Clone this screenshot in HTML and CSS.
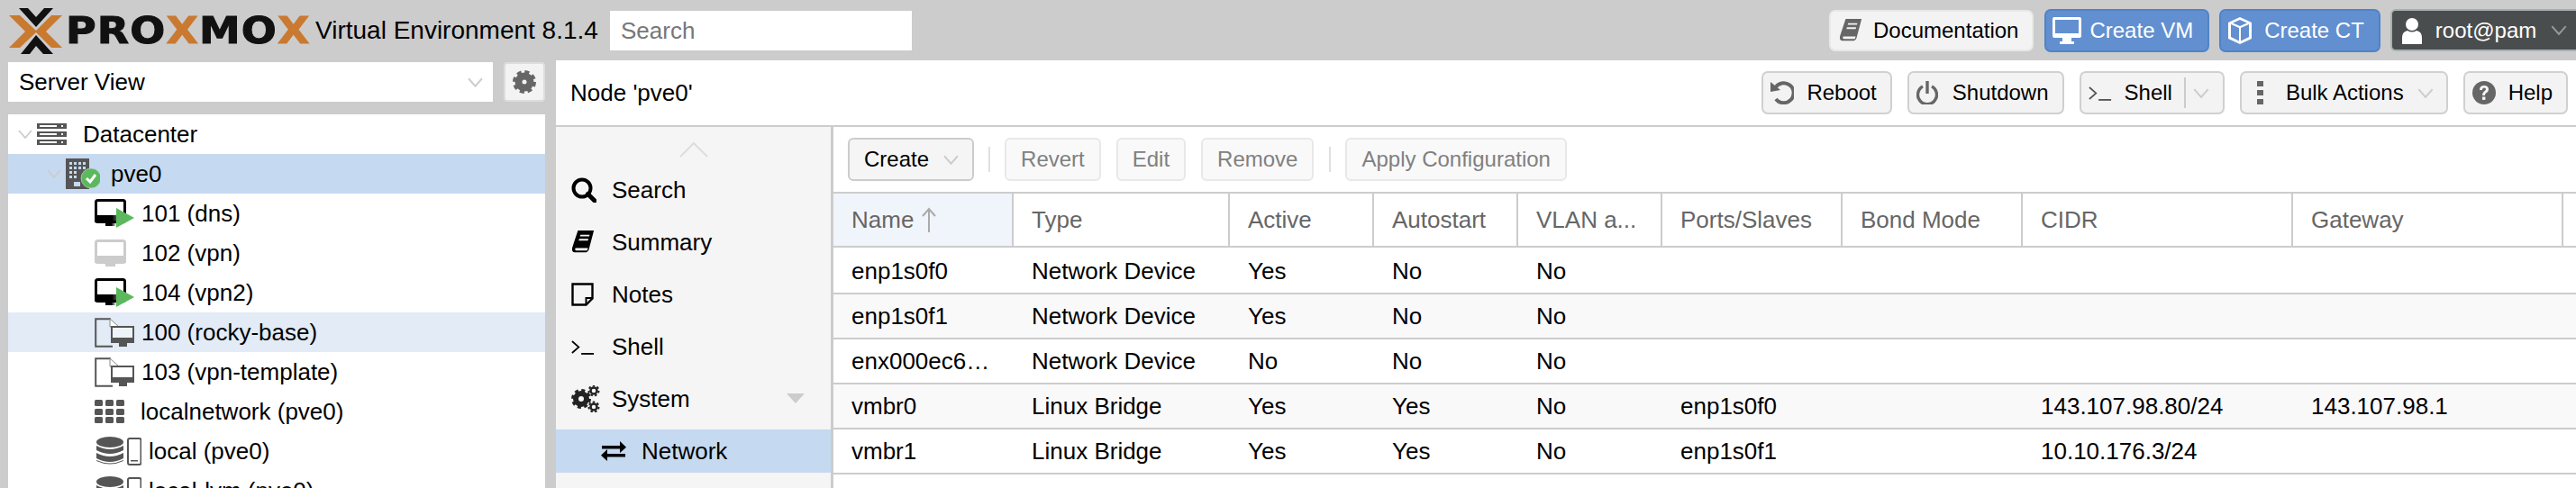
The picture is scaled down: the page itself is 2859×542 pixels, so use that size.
FILE: index.html
```html
<!DOCTYPE html>
<html lang="en">
<head>
    <meta charset="UTF-8">
    <title>pve0 - Proxmox Virtual Environment</title>
    <link rel="stylesheet" href="styles.css">
</head>
<body>
    <svg class="defs" width="0" height="0">
        <defs>
            <linearGradient id="fade" x1="0" x2="1" y1="0" y2="0">
                <stop offset="0.55" stop-color="#000"/>
                <stop offset="1" stop-color="#000" stop-opacity="0"/>
            </linearGradient>
            <symbol id="chev" viewBox="0 0 16 10"><polyline points="1,1 8,9 15,1" fill="none" stroke="currentColor" stroke-width="1.8"/></symbol>
            <symbol id="term" viewBox="0 0 28 18"><path d="M1 2l8 7-8 7" fill="none" stroke="currentColor" stroke-width="1.8"/><rect x="12" y="16" width="15" height="2" fill="currentColor"/></symbol>
            <symbol id="book" viewBox="0 0 26 28"><path d="M7 0h19l-1 4-5 19q-1 3-3 3H3q-3 0-3-4 0-1 1-4zM10 5l-.5 2h11l.5-2zM8.500 10L8 12h11l.5-2zM4 21q-1 3 1 3h13l1-3z" fill="currentColor" fill-rule="evenodd"/></symbol>
            <symbol id="doc-vm" viewBox="0 0 44 33"><path d="M18 1.200H1.200v30.600H20" fill="none" stroke="#555" stroke-width="2"/><path d="M17 1l10 9H17z" fill="#fff" stroke="#888" stroke-width="1"/><rect x="19" y="10" width="24" height="17" fill="#fff" fill-opacity=".4" stroke="#555" stroke-width="2"/><rect x="18" y="22" width="26" height="6" fill="#555"/><rect x="27" y="28" width="9" height="4" fill="#555"/></symbol>
            <symbol id="vm-on" viewBox="0 0 44 33"><rect x="1.500" y="1.500" width="32" height="24" rx="2" fill="none" stroke="#000" stroke-width="3"/><rect x="0" y="18" width="35" height="8" rx="1" fill="url(#fade)"/><rect x="12" y="26" width="12" height="4" fill="url(#fade)"/><polygon points="24,10 44,21 24,32" fill="#5cb85c"/></symbol>
            <symbol id="db" viewBox="0 0 50 33"><g fill="#555"><ellipse cx="15" cy="6" rx="15" ry="6"/><path d="M0 10q15 8 30 0v5q-15 8-30 0z"/><path d="M0 18q15 8 30 0v6q-15 8-30 0z"/><path d="M0 26q15 7 30 0v1q-15 7-30 0z"/></g><rect x="35" y="2" width="14.500" height="29" rx="2" fill="none" stroke="#555" stroke-width="2"/><rect x="38" y="26" width="8" height="1.500" fill="#555"/></symbol>
        </defs>
    </svg>

    <header class="topbar">
        <div class="logo">
            <svg class="logo-mark" width="60" height="52" viewBox="0 0 60 52">
                <polygon points="0,8 12,8 31,26 12,44 0,44 18,26" fill="#c97a30"/>
                <polygon points="59,8 47,8 29,26 47,44 59,44 41,26" fill="#c97a30"/>
                <polygon points="11,0 21,0 30,10 39,0 49,0 30,21" fill="#111"/>
                <polygon points="13,51 23,51 30,42 38,51 49,51 30,30" fill="#111"/>
            </svg>
            <span class="logo-word">PRO<b>X</b>MO<b>X</b></span>
        </div>
        <span class="version">Virtual Environment 8.1.4</span>
        <div class="search-box">Search</div>
        <div class="top-actions">
            <div class="btn doc-btn">
                <svg class="ico" width="26" height="26" color="#666"><use href="#book"/></svg>
                <span>Documentation</span>
            </div>
            <div class="btn blue-btn vm-btn">
                <svg class="ico" width="32" height="30" viewBox="0 0 32 30"><rect x="0" y="0" width="32" height="23" rx="2" fill="#fff"/><rect x="3" y="3" width="26" height="15" fill="#628fcf"/><rect x="11" y="23" width="10" height="5" fill="#fff"/><rect x="8" y="27" width="16" height="3" fill="#fff"/></svg>
                <span>Create VM</span>
            </div>
            <div class="btn blue-btn ct-btn">
                <svg class="ico" width="26" height="30" viewBox="0 0 26 30"><path d="M13 0l13 6v18l-13 6-13-6V6zM3 8v14l9 4.500V12zM14 12v14.500l9-4.500V8zM13 3L5 6.500l8 3.500 8-3.500z" fill="#fff" fill-rule="evenodd"/></svg>
                <span>Create CT</span>
            </div>
            <div class="btn user-btn">
                <svg class="ico" width="22" height="30" viewBox="0 0 22 30"><circle cx="11" cy="8" r="7" fill="#fff"/><path d="M0 30v-7q0-7 6-8 5 3 10 0 6 1 6 8v7z" fill="#fff"/></svg>
                <span>root@pam</span>
                <svg class="caret" width="18" height="11"><use href="#chev"/></svg>
            </div>
        </div>
    </header>

    <div class="main">
        <aside class="side">
            <div class="view-row">
                <div class="view-select">
                    <span>Server View</span>
                    <svg class="select-caret" width="17" height="11"><use href="#chev"/></svg>
                </div>
                <div class="gear-btn">
                    <svg width="26" height="26" viewBox="0 0 26 26"><circle cx="13" cy="13" r="6.500" fill="none" stroke="#666" stroke-width="8"/><circle cx="13" cy="13" r="11" fill="none" stroke="#666" stroke-width="4" stroke-dasharray="5 3.640"/></svg>
                </div>
            </div>
            <div class="tree">
                <div class="tree-row d0">
                    <svg class="tree-chev" width="16" height="10"><use href="#chev"/></svg>
                    <span class="slot s-dc">
                        <svg width="33" height="24" viewBox="0 0 33 24">
                            <g fill="#555"><rect width="33" height="6"/><rect y="9" width="33" height="6"/><rect y="18" width="33" height="6"/></g>
                            <g fill="#fff"><rect x="3" y="2" width="19" height="2"/><rect x="3" y="11" width="19" height="2"/><rect x="3" y="20" width="19" height="2"/><rect x="27" y="2" width="2" height="2"/><rect x="27" y="11" width="2" height="2"/><rect x="27" y="20" width="2" height="2"/></g>
                        </svg>
                    </span>
                    Datacenter
                </div>
                <div class="tree-row d1 selected">
                    <svg class="tree-chev" width="16" height="10"><use href="#chev"/></svg>
                    <span class="slot s-node">
                        <svg width="38" height="34" viewBox="0 0 38 34">
                            <rect width="26" height="34" fill="#555"/>
                            <g fill="#c5d9f0"><rect x="4" y="4" width="3" height="3"/><rect x="9" y="4" width="3" height="3"/><rect x="14" y="4" width="3" height="3"/><rect x="19" y="4" width="3" height="3"/><rect x="4" y="9" width="3" height="3"/><rect x="9" y="9" width="3" height="3"/><rect x="14" y="9" width="3" height="3"/><rect x="19" y="9" width="3" height="3"/><rect x="4" y="14" width="3" height="3"/><rect x="9" y="14" width="3" height="3"/><rect x="4" y="19" width="3" height="3"/><rect x="9" y="19" width="3" height="3"/><rect x="9" y="26" width="7" height="5"/></g>
                            <circle cx="28" cy="22" r="11" fill="#5cb85c" stroke="#c5d9f0" stroke-opacity=".6"/>
                            <polyline points="23,22 27,26 33,18" fill="none" stroke="#fff" stroke-width="3"/>
                        </svg>
                    </span>
                    pve0
                </div>
                <div class="tree-row d2">
                    <span class="slot s-leaf"><svg width="44" height="33"><use href="#vm-on"/></svg></span>
                    101 (dns)
                </div>
                <div class="tree-row d2">
                    <span class="slot s-leaf">
                        <svg width="35" height="31" viewBox="0 0 35 31"><rect x="1.500" y="1.500" width="32" height="24" rx="2" fill="#fff" stroke="#ccc" stroke-width="3"/><rect y="18" width="35" height="8" rx="1" fill="#ccc"/><rect x="12" y="26" width="11" height="4" fill="#ccc"/></svg>
                    </span>
                    102 (vpn)
                </div>
                <div class="tree-row d2">
                    <span class="slot s-leaf"><svg width="44" height="33"><use href="#vm-on"/></svg></span>
                    104 (vpn2)
                </div>
                <div class="tree-row d2 hovered">
                    <span class="slot s-leaf"><svg width="44" height="33"><use href="#doc-vm"/></svg></span>
                    100 (rocky-base)
                </div>
                <div class="tree-row d2">
                    <span class="slot s-leaf"><svg width="44" height="33"><use href="#doc-vm"/></svg></span>
                    103 (vpn-template)
                </div>
                <div class="tree-row d2">
                    <span class="slot s-net">
                        <svg width="33" height="26" viewBox="0 0 33 26"><g fill="#555"><rect width="9" height="7" rx="1.500"/><rect x="12" width="9" height="7" rx="1.500"/><rect x="24" width="9" height="7" rx="1.500"/><rect y="10" width="9" height="7" rx="1.500"/><rect x="12" y="10" width="9" height="7" rx="1.500"/><rect x="24" y="10" width="9" height="7" rx="1.500"/><rect y="19" width="9" height="7" rx="1.500"/><rect x="12" y="19" width="9" height="7" rx="1.500"/><rect x="24" y="19" width="9" height="7" rx="1.500"/></g></svg>
                    </span>
                    localnetwork (pve0)
                </div>
                <div class="tree-row d2">
                    <span class="slot s-store"><svg width="50" height="33"><use href="#db"/></svg></span>
                    local (pve0)
                </div>
                <div class="tree-row d2">
                    <span class="slot s-store"><svg width="50" height="33"><use href="#db"/></svg></span>
                    local-lvm (pve0)
                </div>
            </div>
        </aside>

        <section class="center">
            <div class="node-bar">
                <span class="node-title">Node 'pve0'</span>
                <div class="node-actions">
                    <div class="btn">
                        <span class="icon-slot"><svg width="26" height="26" viewBox="0 0 26 26"><path d="M5 8a11 11 0 1 1 1 12" fill="none" stroke="#666" stroke-width="4"/><polygon points="0,1 11,10 0,12" fill="#666"/></svg></span>
                        <span>Reboot</span>
                    </div>
                    <div class="btn">
                        <span class="icon-slot"><svg width="24" height="26" viewBox="0 0 24 26"><path d="M7 6a10.500 10.500 0 1 0 10 0" fill="none" stroke="#666" stroke-width="3.400"/><rect x="10.300" y="0" width="3.400" height="14" fill="#666"/></svg></span>
                        <span>Shutdown</span>
                    </div>
                    <div class="btn shell-btn">
                        <span class="icon-slot"><svg width="26" height="17" color="#555"><use href="#term"/></svg></span>
                        <span>Shell</span>
                        <i class="split"></i>
                        <svg class="caret" width="18" height="11"><use href="#chev"/></svg>
                    </div>
                    <div class="btn bulk-btn">
                        <svg class="dots" width="8" height="26" viewBox="0 0 8 26"><g fill="#666"><rect width="7" height="6"/><rect y="10" width="7" height="6"/><rect y="20" width="7" height="6"/></g></svg>
                        <span>Bulk Actions</span>
                        <svg class="caret" width="18" height="11"><use href="#chev"/></svg>
                    </div>
                    <div class="btn help-btn">
                        <span class="icon-slot"><svg width="26" height="26" viewBox="0 0 26 26"><circle cx="13" cy="13" r="13" fill="#666"/><path d="M8 10q0-5 5-5t5 4.500q0 2.500-3 4-1 .6-1 2.500h-3q0-3 2-4.500 2-1.200 2-2.500t-2-1.500-2 2.500z" fill="#f5f5f5"/><rect x="11" y="17.500" width="3.400" height="3.400" fill="#f5f5f5"/></svg></span>
                        <span>Help</span>
                    </div>
                </div>
            </div>

            <div class="content">
                <nav class="nav">
                    <div class="nav-up">
                        <svg width="32" height="18" viewBox="0 0 32 18"><polyline points="1,17 16,2 31,17" fill="none" stroke="#ddd" stroke-width="2"/></svg>
                    </div>
                    <div class="nav-item">
                        <span class="nav-ico"><svg width="28" height="28" viewBox="0 0 28 28"><circle cx="12" cy="12" r="9.500" fill="none" stroke="#000" stroke-width="4"/><line x1="18.500" y1="18.500" x2="26" y2="26" stroke="#000" stroke-width="5" stroke-linecap="round"/></svg></span>
                        Search
                    </div>
                    <div class="nav-item">
                        <span class="nav-ico"><svg width="26" height="26" color="#000"><use href="#book"/></svg></span>
                        Summary
                    </div>
                    <div class="nav-item">
                        <span class="nav-ico"><svg width="26" height="26" viewBox="0 0 26 26"><path d="M1.500 1.500h22v16l-7 7h-15z" fill="none" stroke="#000" stroke-width="2.400"/><path d="M23 17h-6.500v7" fill="none" stroke="#000" stroke-width="2"/></svg></span>
                        Notes
                    </div>
                    <div class="nav-item">
                        <span class="nav-ico"><svg width="26" height="17" color="#000"><use href="#term"/></svg></span>
                        Shell
                    </div>
                    <div class="nav-item">
                        <span class="nav-ico"><svg width="32" height="30" viewBox="0 0 32 30"><circle cx="11" cy="15" r="6" fill="none" stroke="#222" stroke-width="6"/><circle cx="11" cy="15" r="9.500" fill="none" stroke="#222" stroke-width="3" stroke-dasharray="4 3.460"/><g fill="none" stroke="#222"><circle cx="25" cy="6" r="3.500" stroke-width="2.500"/><circle cx="25" cy="24" r="3.500" stroke-width="2.500"/><circle cx="25" cy="6" r="5.500" stroke-width="2" stroke-dasharray="2.500 2.300"/><circle cx="25" cy="24" r="5.500" stroke-width="2" stroke-dasharray="2.500 2.300"/></g></svg></span>
                        System
                        <svg class="nav-arrow" width="20" height="11" viewBox="0 0 20 11"><polygon points="0,0 20,0 10,11" fill="#ccc"/></svg>
                    </div>
                    <div class="nav-item sub active">
                        <span class="nav-ico"><svg width="28" height="24" viewBox="0 0 28 24"><g fill="#000"><rect x="1" y="6" width="22" height="3.500"/><polygon points="21,1 28,7.800 21,14"/><rect x="5" y="15" width="22" height="3.500"/><polygon points="7,10 0,16.800 7,23"/></g></svg></span>
                        Network
                    </div>
                </nav>

                <div class="panel">
                    <div class="toolbar">
                        <div class="tbtn create-btn"><span>Create</span><svg class="caret" width="17" height="11"><use href="#chev"/></svg></div>
                        <i class="tsep"></i>
                        <div class="tbtn off">Revert</div>
                        <div class="tbtn off">Edit</div>
                        <div class="tbtn off">Remove</div>
                        <i class="tsep"></i>
                        <div class="tbtn apply">Apply Configuration</div>
                    </div>
                    <table class="grid">
                        <colgroup>
                            <col class="w200"><col class="w240"><col class="w160"><col class="w160"><col class="w160"><col class="w200"><col class="w200"><col class="w300"><col class="w300"><col>
                        </colgroup>
                        <thead>
                            <tr>
                                <th class="sorted">Name <svg class="sort-arrow" width="18" height="28" viewBox="0 0 18 28"><path d="M9 28V2M2 10l7-8 7 8" fill="none" stroke="#aaa" stroke-width="2"/></svg></th>
                                <th>Type</th><th>Active</th><th>Autostart</th><th>VLAN a...</th><th>Ports/Slaves</th><th>Bond Mode</th><th>CIDR</th><th>Gateway</th><th class="last"></th>
                            </tr>
                        </thead>
                        <tbody>
                            <tr class="first"><td>enp1s0f0</td><td>Network Device</td><td>Yes</td><td>No</td><td>No</td><td></td><td></td><td></td><td></td><td></td></tr>
                            <tr class="alt"><td>enp1s0f1</td><td>Network Device</td><td>Yes</td><td>No</td><td>No</td><td></td><td></td><td></td><td></td><td></td></tr>
                            <tr><td>enx000ec6…</td><td>Network Device</td><td>No</td><td>No</td><td>No</td><td></td><td></td><td></td><td></td><td></td></tr>
                            <tr class="alt"><td>vmbr0</td><td>Linux Bridge</td><td>Yes</td><td>Yes</td><td>No</td><td>enp1s0f0</td><td></td><td>143.107.98.80/24</td><td>143.107.98.1</td><td></td></tr>
                            <tr><td>vmbr1</td><td>Linux Bridge</td><td>Yes</td><td>Yes</td><td>No</td><td>enp1s0f1</td><td></td><td>10.10.176.3/24</td><td></td><td></td></tr>
                        </tbody>
                    </table>
                </div>
            </div>
        </section>
    </div>
</body>
</html>
```

FILE: styles.css
```css
* {
    box-sizing: border-box;
}

html, body {
    margin: 0;
    height: 542px;
    overflow: hidden;
}

body {
    font-family: "Liberation Sans", Arial, sans-serif;
    font-size: 26px;
    color: #000;
    background: #ccc;
}

.defs {
    position: absolute;
}

/* top bar */
.topbar {
    display: flex;
    align-items: center;
    height: 67px;
}

.logo {
    display: flex;
    align-items: center;
    flex: none;
    width: 350px;
    padding-left: 10px;
    filter: blur(0.6px);
}

.logo-mark {
    flex: none;
    margin-top: 2px;
}

.logo-word {
    margin-left: 3px;
    font-family: "DejaVu Sans", sans-serif;
    font-weight: 700;
    font-size: 41px;
    letter-spacing: 1px;
    color: #111;
    white-space: nowrap;
    transform: scaleX(1.12);
    transform-origin: left center;
    -webkit-text-stroke: 1px currentColor;
}

.logo-word b {
    color: #c97a30;
}

.version {
    flex: none;
    width: 327px;
    font-size: 28px;
    white-space: nowrap;
}

.search-box {
    flex: none;
    width: 335px;
    height: 44px;
    padding-left: 12px;
    line-height: 44px;
    background: #fff;
    color: #777;
}

.top-actions {
    display: flex;
    align-items: center;
    gap: 11px;
    margin-left: auto;
    width: 829px;
    flex: none;
}

.btn {
    display: flex;
    align-items: center;
    height: 48px;
    padding: 0 15px 0 8px;
    font-size: 24px;
    background: #f3f3f3;
    border: 2px solid #d0d0d0;
    border-radius: 7px;
    white-space: nowrap;
}

.ico {
    flex: none;
}

.doc-btn {
    height: 46px;
    margin-right: 1px;
    padding-left: 9px;
    border-color: #e8e8e8;
}

.doc-btn .ico {
    margin-right: 12px;
}

.blue-btn {
    color: #fff;
    background: #628fcf;
    border-color: #5083c8;
}

.vm-btn {
    padding-left: 7px;
    padding-right: 16px;
}

.vm-btn .ico {
    margin-right: 9px;
}

.ct-btn {
    padding-right: 16px;
}

.ct-btn .ico {
    margin-right: 14px;
}

.user-btn {
    flex: 1;
    height: 47px;
    padding-left: 11px;
    color: #fff;
    background: #4a4d4e;
    border-color: #a8b0b0;
    border-width: 2px 0 2px 2px;
    border-radius: 6px 0 0 6px;
}

.user-btn .ico {
    margin-right: 15px;
}

.caret {
    flex: none;
    color: #ccc;
}

.user-btn .caret {
    margin-left: 16px;
    color: #999;
}

/* left column */
.main {
    display: flex;
    height: 475px;
}

.side {
    flex: none;
    width: 617px;
    padding: 2px 12px 0 9px;
}

.view-row {
    display: flex;
    justify-content: space-between;
}

.view-select {
    display: flex;
    align-items: center;
    justify-content: space-between;
    width: 538px;
    height: 44px;
    padding: 0 11px 0 12px;
    background: #fff;
}

.select-caret {
    color: #ccc;
}

.gear-btn {
    display: flex;
    align-items: center;
    justify-content: center;
    width: 46px;
    height: 44px;
    background: #f3f3f3;
    border: 2px solid #ddd;
    border-radius: 4px;
}

.tree {
    margin-top: 14px;
    height: 415px;
    overflow: hidden;
    background: #fff;
}

.tree-row {
    display: flex;
    align-items: center;
    height: 44px;
    white-space: nowrap;
}

.tree-row.selected {
    background: #c5d9f0;
}

.tree-row.hovered {
    background: #e2ebf6;
}

.d0 {
    padding-left: 11px;
}

.d1 {
    padding-left: 43px;
}

.d2 {
    padding-left: 96px;
}

.tree-chev {
    flex: none;
    margin-right: 5px;
    color: #ccc;
}

.slot {
    display: flex;
    align-items: center;
    flex: none;
}

.s-dc {
    width: 51px;
}

.s-node {
    width: 50px;
}

.s-leaf {
    width: 52px;
}

.s-net {
    width: 51px;
}

.s-store {
    width: 60px;
    padding-left: 2px;
}

/* center */
.center {
    flex: 1;
    min-width: 0;
    background: #fff;
}

.node-bar {
    display: flex;
    align-items: center;
    height: 74px;
    padding: 0 9px 0 16px;
    border-bottom: 2px solid #ccc;
}

.node-actions {
    display: flex;
    gap: 17px;
    margin-left: auto;
}

.icon-slot {
    display: flex;
    align-items: center;
    flex: none;
    width: 40px;
}

.split {
    width: 2px;
    height: 34px;
    margin: 0 8px 0 13px;
    background: #ccc;
}

.bulk-btn {
    padding-left: 17px;
    padding-right: 14px;
}

.dots {
    margin-right: 24px;
}

.bulk-btn .caret {
    margin-left: 15px;
}

.content {
    display: flex;
    height: 401px;
}

.nav {
    flex: none;
    width: 308px;
    background: #f5f5f5;
    border-right: 3px solid #ccc;
}

.nav-up {
    display: flex;
    justify-content: center;
    height: 46px;
    padding-top: 16px;
}

.nav-item {
    display: flex;
    align-items: center;
    position: relative;
    height: 48px;
    margin-bottom: 10px;
    padding-left: 17px;
}

.nav-ico {
    display: flex;
    align-items: center;
    flex: none;
    width: 45px;
}

.sub {
    padding-left: 50px;
}

.active {
    background: #c5d9f0;
}

.nav-arrow {
    position: absolute;
    right: 29px;
    top: 18px;
}

.panel {
    flex: 1;
    min-width: 0;
}

.toolbar {
    display: flex;
    align-items: center;
    gap: 16px;
    height: 72px;
    padding: 0 16px;
}

.tbtn {
    display: flex;
    align-items: center;
    height: 48px;
    padding: 0 16px;
    font-size: 24px;
    background: #f5f5f5;
    border: 2px solid #ccc;
    border-radius: 6px;
    white-space: nowrap;
}

.tbtn.off, .tbtn.apply {
    color: #808080;
    background: #f9f9f9;
    border-color: #e8e8e8;
}

.tbtn.off {
    margin-right: 1px;
}

.create-btn {
    padding-right: 15px;
}

.create-btn .caret {
    margin-left: 16px;
}

.tsep {
    width: 2px;
    height: 28px;
    background: #e0e0e0;
}

.grid {
    width: 100%;
    table-layout: fixed;
    border-collapse: separate;
    border-spacing: 0;
    border-top: 2px solid #ccc;
}

.w160 {
    width: 160px;
}

.w200 {
    width: 200px;
}

.w240 {
    width: 240px;
}

.w300 {
    width: 300px;
}

.grid th {
    height: 60px;
    padding: 0 0 0 20px;
    font-weight: normal;
    text-align: left;
    color: #666;
    border-right: 2px solid #ccc;
    border-bottom: 2px solid #ccc;
    white-space: nowrap;
}

.grid th.sorted {
    background: #f0f5fb;
}

.grid th.last {
    border-right: 0;
}

.sort-arrow {
    vertical-align: -5px;
}

.grid td {
    height: 50px;
    padding: 0 0 0 20px;
    border-bottom: 2px solid #ccc;
    white-space: nowrap;
}

.grid .first td {
    height: 52px;
    padding-top: 2px;
}

.alt td {
    background: #f9f9fa;
}
```
